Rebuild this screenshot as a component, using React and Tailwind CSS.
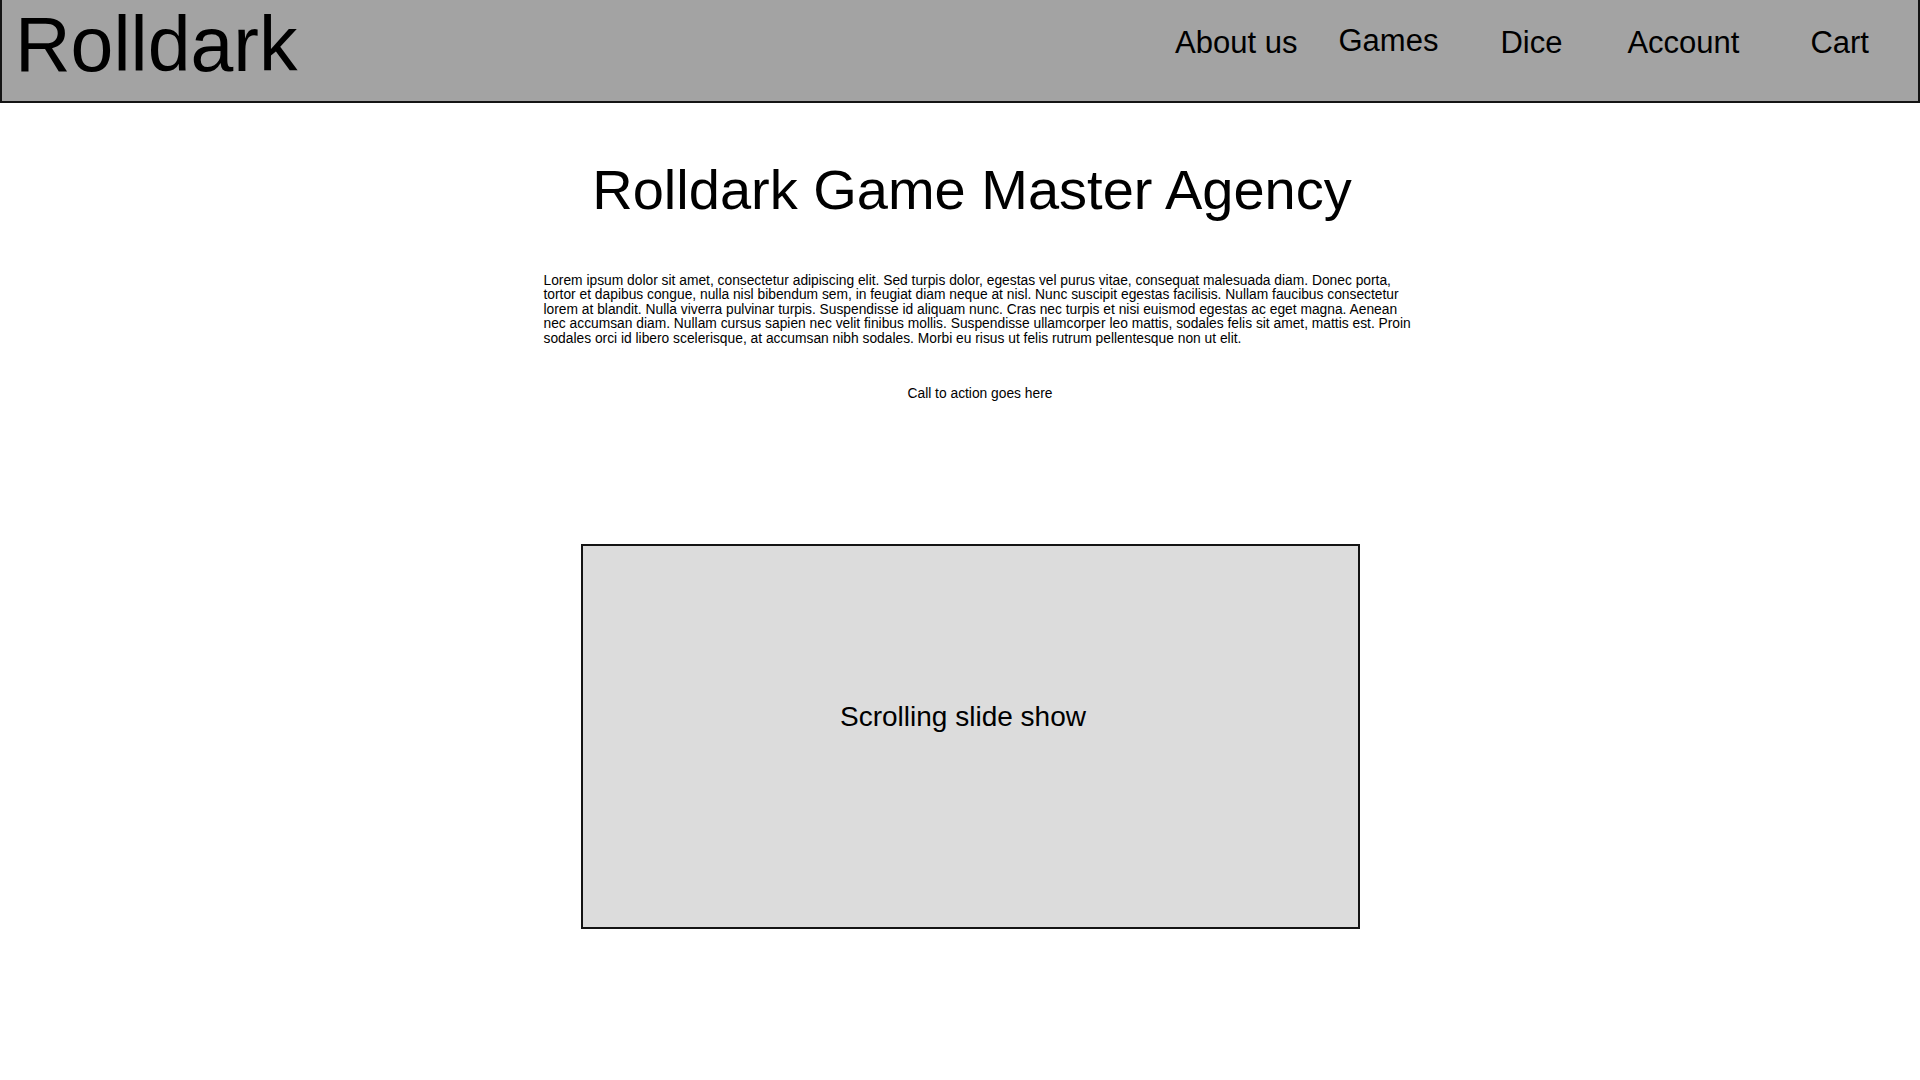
export default function App() {
  return (
    <div className="min-h-screen bg-white text-black font-['Liberation_Sans',Arial,sans-serif]">
      <header className="flex h-[103px] border-x-2 border-b-2 border-[#141414] bg-[#a3a3a3]">
        <div className="pl-[13px] pt-[6px] text-[77px] leading-none">Rolldark</div>
        <nav className="ml-auto flex items-start pt-[25px] pr-[49px] text-[31px] leading-none">
          <a className="mt-[2px]">About us</a>
          <a className="ml-[41px]">Games</a>
          <a className="ml-[62px] mt-[2px]">Dice</a>
          <a className="ml-[65px] mt-[2px]">Account</a>
          <a className="ml-[71px] mt-[2px]">Cart</a>
        </nav>
      </header>
      <main className="flex flex-col items-center pl-[20px]">
        <h1 className="mt-[59px] pl-[4px] text-[56px] leading-none font-normal">Rolldark Game Master Agency</h1>
        <p className="mt-[56px] ml-[20px] w-[873px] text-[13.8px] leading-[14.4px]">
          Lorem ipsum dolor sit amet, consectetur adipiscing elit. Sed turpis dolor, egestas vel purus vitae, consequat malesuada diam. Donec porta, tortor et dapibus congue, nulla nisl bibendum sem, in feugiat diam neque at nisl. Nunc suscipit egestas facilisis. Nullam faucibus consectetur lorem at blandit. Nulla viverra pulvinar turpis. Suspendisse id aliquam nunc. Cras nec turpis et nisi euismod egestas ac eget magna. Aenean nec accumsan diam. Nullam cursus sapien nec velit finibus mollis. Suspendisse ullamcorper leo mattis, sodales felis sit amet, mattis est. Proin sodales orci id libero scelerisque, at accumsan nibh sodales. Morbi eu risus ut felis rutrum pellentesque non ut elit.
        </p>
        <p className="mt-[41px] ml-[20px] text-[13.8px] leading-[14.4px]">Call to action goes here</p>
        <div className="mt-[143px] flex h-[385px] w-[779px] items-center justify-center border-2 border-[#141414] bg-[#dcdcdc] pr-[14px] pb-[39px] text-[28px]">
          Scrolling slide show
        </div>
      </main>
    </div>
  );
}
